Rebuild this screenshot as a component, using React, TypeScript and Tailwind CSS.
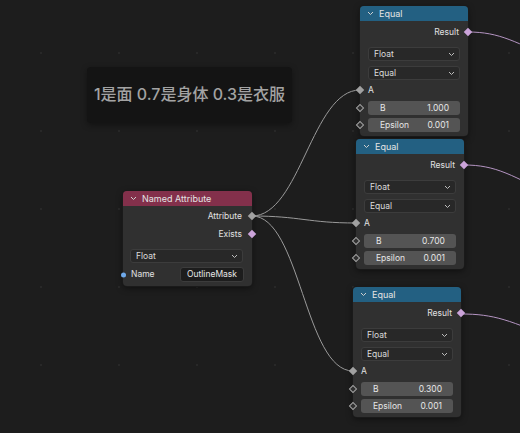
import React from 'react';

const font = "font-['Inter','Noto_Sans_CJK_SC',sans-serif]";

const Chevron: React.FC<{ className?: string }> = ({ className }) => (
  <svg width="7" height="5" viewBox="0 0 7 5" className={className}>
    <polyline points="1,1 3.5,3.5 6,1" fill="none" stroke="currentColor" strokeWidth="1" />
  </svg>
);

// socket shapes
const Diamond: React.FC<{ color: string; hollow?: boolean; side: 'left' | 'right' }> = ({ color, hollow, side }) => (
  <span
    className={`absolute top-1/2 w-[6px] h-[6px] -translate-y-1/2 rotate-45 ${side === 'left' ? '-left-[3px]' : '-right-[3px]'} ${color} ${hollow ? 'bg-[#303030] border-[1.5px]' : ''}`}
  />
);

const NodeHeader: React.FC<{ title: string; color: string }> = ({ title, color }) => (
  <div className={`flex items-center h-[15px] rounded-t-[4px] px-[7px] gap-[5px] text-[9px] text-[#e4e4e4] ${color}`}>
    <Chevron className="text-[#d0d0d0]" />
    <span>{title}</span>
  </div>
);

const Dropdown: React.FC<{ label: string }> = ({ label }) => (
  <div className="flex items-center justify-between h-[14px] rounded-[3px] bg-[#282828] border border-[#3c3c3c] pl-[5px] pr-[4px] text-[8.5px] text-[#dcdcdc]">
    <span>{label}</span>
    <Chevron className="text-[#bdbdbd]" />
  </div>
);

const NumField: React.FC<{ label: string; value: string }> = ({ label, value }) => (
  <div className="relative -mx-[8px] px-[8px]">
    <Diamond color="border-[#a1a1a1]" hollow side="left" />
    <div className="flex items-center justify-between h-[14px] rounded-[3px] bg-[#545454] pl-[12px] pr-[11px] text-[8.5px] text-[#e6e6e6]">
      <span>{label}</span>
      <span>{value}</span>
    </div>
  </div>
);

const EqualNode: React.FC<{ className: string; b: string }> = ({ className, b }) => (
  <div className={`absolute w-[108px] rounded-[4px] bg-[#303030] shadow-[0_0_0_1px_#1a1a1a,0_2px_6px_rgba(0,0,0,0.5)] ${className}`}>
    <NodeHeader title="Equal" color="bg-[#236082]" />
    <div className="flex flex-col px-[8px] pt-[4px] pb-[4px]">
      <div className="relative -mx-[8px] px-[8px] h-[14px] flex items-center justify-end pr-[9px] text-[8.5px] text-[#e0e0e0]">
        Result
        <Diamond color="bg-[#cba3da]" side="right" />
      </div>
      <div className="mt-[8px]"><Dropdown label="Float" /></div>
      <div className="mt-[5px]"><Dropdown label="Equal" /></div>
      <div className="relative -mx-[8px] px-[8px] mt-[4px] h-[12px] flex items-center text-[8.5px] text-[#e0e0e0]">
        A
        <Diamond color="bg-[#a1a1a1]" side="left" />
      </div>
      <div className="mt-[5px]"><NumField label="B" value={b} /></div>
      <div className="mt-[3px]"><NumField label="Epsilon" value="0.001" /></div>
    </div>
  </div>
);

const NamedAttributeNode: React.FC = () => (
  <div className="absolute left-[123px] top-[191px] w-[129px] rounded-[4px] bg-[#303030] shadow-[0_0_0_1px_#1a1a1a,0_2px_6px_rgba(0,0,0,0.5)]">
    <NodeHeader title="Named Attribute" color="bg-[#83304b]" />
    <div className="flex flex-col px-[7px] pt-[3px] pb-[4px]">
      <div className="relative -mx-[7px] h-[14px] flex items-center justify-end pr-[10px] text-[8.5px] text-[#e0e0e0]">
        Attribute
        <Diamond color="bg-[#a1a1a1]" side="right" />
      </div>
      <div className="relative -mx-[7px] mt-[4px] h-[14px] flex items-center justify-end pr-[10px] text-[8.5px] text-[#e0e0e0]">
        Exists
        <Diamond color="bg-[#cba3da]" side="right" />
      </div>
      <div className="mt-[8px] mr-[2px]"><Dropdown label="Float" /></div>
      <div className="relative -mx-[7px] px-[8px] mt-[4px] h-[15px] flex items-center justify-between text-[8.5px] text-[#e0e0e0]">
        <span className="absolute -left-[2.5px] top-1/2 -translate-y-1/2 w-[5px] h-[5px] rounded-full bg-[#6fa9ea]" />
        <span>Name</span>
        <div className="flex items-center justify-center w-[64px] h-[15px] rounded-[3px] bg-[#1d1d1d] border border-[#3c3c3c] text-[#e6e6e6]">
          OutlineMask
        </div>
      </div>
    </div>
  </div>
);

export default function App() {
  return (
    <div className={`relative w-[520px] h-[433px] overflow-hidden bg-[#1d1d1d] ${font}`}>
      <div className="absolute inset-0 bg-[radial-gradient(circle,#282828_1px,transparent_1.5px)] bg-[length:78px_78px] bg-[position:2px_14px]" />

      {/* frame with note */}
      <div className="absolute left-[87px] top-[67px] w-[205px] h-[56px] rounded-[4px] bg-[#141414] shadow-[0_2px_6px_rgba(0,0,0,0.4)] flex items-center justify-center">
        <span className="text-[16px] font-medium text-[#a3a3a3] whitespace-nowrap -mt-[2px]">1是面 0.7是身体 0.3是衣服</span>
      </div>

      {/* links */}
      <svg className="absolute inset-0" width="520" height="433" viewBox="0 0 520 433">
        <g fill="none" strokeWidth="1">
          <path d="M252 216 C300 216, 312 90, 360 90" stroke="#9a9a9a" />
          <path d="M252 216 C300 216, 308 223, 356 223" stroke="#9a9a9a" />
          <path d="M252 216 C300 216, 305 371, 353 371" stroke="#9a9a9a" />
          <path d="M468 32 C500 32, 515 42, 560 62" stroke="#b494c2" />
          <path d="M464 165 C496 165, 512 175, 560 200" stroke="#b494c2" />
          <path d="M461 314 C494 314, 510 320, 560 342" stroke="#b494c2" />
        </g>
      </svg>

      <EqualNode className="left-[360px] top-[6px]" b="1.000" />
      <EqualNode className="left-[356px] top-[139px]" b="0.700" />
      <EqualNode className="left-[353px] top-[287px]" b="0.300" />
      <NamedAttributeNode />
    </div>
  );
}
